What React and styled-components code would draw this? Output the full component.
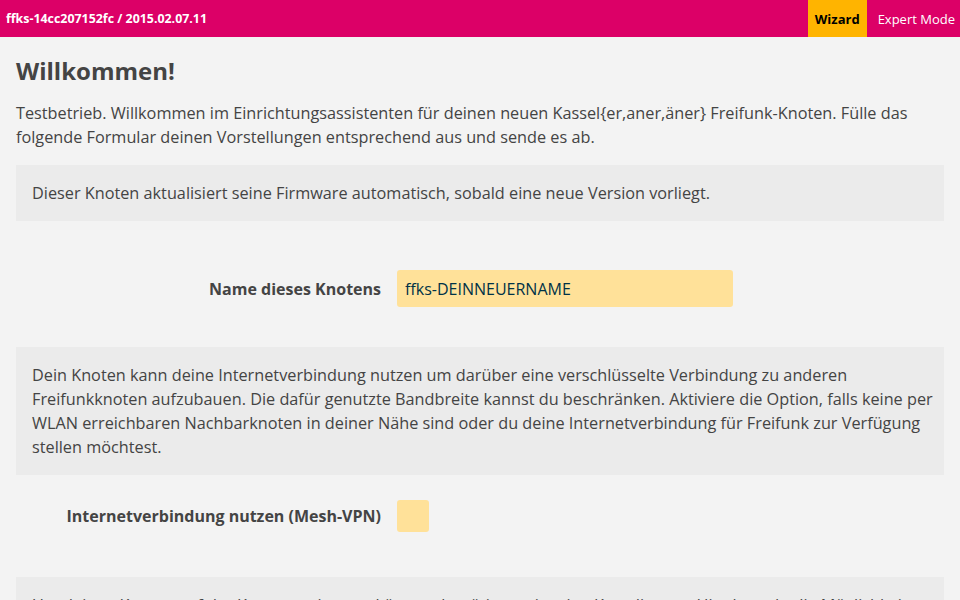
import React from "react";
import styled, { createGlobalStyle } from "styled-components";

const GlobalStyle = createGlobalStyle`
  html, body {
    margin: 0;
    padding: 0;
    background: #f3f3f3;
    font-family: "Open Sans", "Liberation Sans", sans-serif;
    color: #444;
  }
`;

const Header = styled.header`
  display: flex;
  align-items: stretch;
  height: 37px;
  background: #dc0067;
  color: #fff;
  font-size: 13px;
`;

const Title = styled.div`
  flex: 1;
  display: flex;
  align-items: center;
  padding-left: 6px;
  font-size: 12.4px;
  font-weight: 700;
`;

const NavItem = styled.div`
  display: flex;
  align-items: center;
  font-weight: ${(p) => (p.active ? 700 : 400)};
  background: ${(p) => (p.active ? "#ffb400" : "transparent")};
  color: ${(p) => (p.active ? "#000" : "#fff")};
  margin-right: ${(p) => (p.last ? "5px" : "0")};
  padding-left: ${(p) => (p.last ? "11px" : "7px")};
  padding-right: ${(p) => (p.last ? "0" : "7px")};
`;

const Main = styled.main`
  padding: 0 16px;
`;

const Heading = styled.h2`
  margin: 20px 0 16px;
  font-size: 24px;
  line-height: 28px;
  font-weight: 700;
  color: #444;
`;

const Text = styled.p`
  margin: 0 0 16px;
  font-size: 16.26px;
  line-height: 24px;
`;

const InfoBox = styled.div`
  background: #ebebeb;
  padding: 16px 8px 16px 16px;
  font-size: 16.26px;
  line-height: 24px;
`;

const FormRow = styled.div`
  display: grid;
  grid-template-columns: 365px 336px;
  column-gap: 16px;
  align-items: center;
  margin: ${(p) => p.m};
`;

const Label = styled.label`
  text-align: right;
  font-weight: 700;
  font-size: 16px;
  color: #444;
`;

const TextInput = styled.input`
  box-sizing: border-box;
  height: 37px;
  width: 336px;
  border: none;
  border-radius: 3px;
  background: #ffe199;
  padding: 0 8px;
  font-family: inherit;
  font-size: 16px;
  color: #003247;
  outline: none;
`;

const CheckBox = styled.span`
  display: block;
  width: 32px;
  height: 32px;
  border-radius: 3px;
  background: #ffe199;
`;

export default function App() {
  return (
    <>
      <GlobalStyle />
      <Header>
        <Title>ffks-14cc207152fc / 2015.02.07.11</Title>
        <NavItem active>Wizard</NavItem>
        <NavItem last>Expert Mode</NavItem>
      </Header>
      <Main>
        <Heading>Willkommen!</Heading>
        <Text>
          Testbetrieb. Willkommen im Einrichtungsassistenten für deinen neuen
          Kassel&#123;er,aner,äner&#125; Freifunk-Knoten. Fülle das folgende
          Formular deinen Vorstellungen entsprechend aus und sende es ab.
        </Text>
        <InfoBox>
          Dieser Knoten aktualisiert seine Firmware automatisch, sobald eine
          neue Version vorliegt.
        </InfoBox>
        <FormRow m="49px 0 40px">
          <Label>Name dieses Knotens</Label>
          <TextInput defaultValue="ffks-DEINNEUERNAME" />
        </FormRow>
        <InfoBox>
          Dein Knoten kann deine Internetverbindung nutzen um darüber eine
          verschlüsselte Verbindung zu anderen Freifunkknoten aufzubauen. Die
          dafür genutzte Bandbreite kannst du beschränken. Aktiviere die
          Option, falls keine per WLAN erreichbaren Nachbarknoten in deiner
          Nähe sind oder du deine Internetverbindung für Freifunk zur
          Verfügung stellen möchtest.
        </InfoBox>
        <FormRow m="25px 0 45px">
          <Label>Internetverbindung nutzen (Mesh-VPN)</Label>
          <CheckBox />
        </FormRow>
        <InfoBox>
          Um deinen Knoten auf der Karte anzeigen zu können, benötigen wir
          seine Koordinaten. Hier hast du die Möglichkeit, diese zu
          hinterlegen.
        </InfoBox>
      </Main>
    </>
  );
}
